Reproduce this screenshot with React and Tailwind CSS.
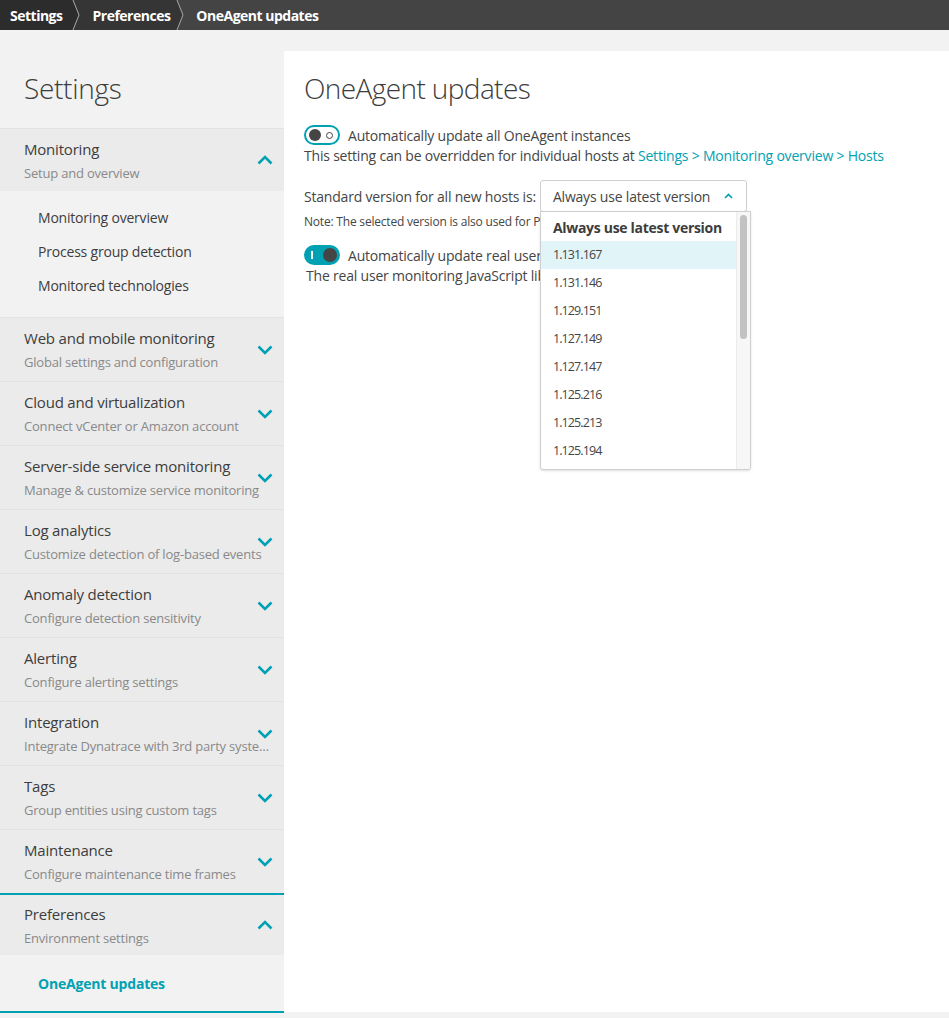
import React from 'react';

const TEAL = '#00a1b2';

const sections = [
  { title: 'Web and mobile monitoring', sub: 'Global settings and configuration' },
  { title: 'Cloud and virtualization', sub: 'Connect vCenter or Amazon account' },
  { title: 'Server-side service monitoring', sub: 'Manage & customize service monitoring' },
  { title: 'Log analytics', sub: 'Customize detection of log-based events' },
  { title: 'Anomaly detection', sub: 'Configure detection sensitivity' },
  { title: 'Alerting', sub: 'Configure alerting settings' },
  { title: 'Integration', sub: 'Integrate Dynatrace with 3rd party systems' },
  { title: 'Tags', sub: 'Group entities using custom tags' },
  { title: 'Maintenance', sub: 'Configure maintenance time frames' },
];

const versions = [
  '1.131.167',
  '1.131.146',
  '1.129.151',
  '1.127.149',
  '1.127.147',
  '1.125.216',
  '1.125.213',
  '1.125.194',
  '1.125.182',
];

const Chevron = ({ up = false, className = '' }) => (
  <svg width="16" height="10" viewBox="0 0 16 10" className={className}>
    <polyline
      points={up ? '1.5,8.5 8,2 14.5,8.5' : '1.5,1.5 8,8 14.5,1.5'}
      fill="none"
      stroke={TEAL}
      strokeWidth="2.6"
    />
  </svg>
);

// breadcrumb separator: left colour filled up to the chevron line
const CrumbSep = ({ from, to }) => (
  <svg width="8" height="30" viewBox="0 0 8 30" style={{ background: to }}>
    <polygon points="0,0 1,0 7,15 1,30 0,30" fill={from} />
    <polyline points="1,0 7,15 1,30" fill="none" stroke="#a8a8a8" strokeWidth="1" />
  </svg>
);

const SectionHeader = ({ title, sub, open = false, h = 'h-[63px]', pt = 'pt-[9px]' }) => (
  <div className={`relative bg-[#ebebeb] pl-[24px] pr-[11px] ${h} ${pt}`}>
    <div className="text-[15px] leading-[22px] text-[#3d3d3d]">{title}</div>
    <div className="mt-[2px] truncate text-[13px] leading-[22px] text-[#898989]">{sub}</div>
    <Chevron up={open} className="absolute right-[11px] top-1/2 -translate-y-1/2" />
  </div>
);

export default function App() {
  return (
    <div className="min-h-screen bg-[#f2f2f2] font-['Open_Sans',sans-serif] tracking-[-0.2px] text-[#454545]">
      {/* Breadcrumb bar */}
      <div className="flex h-[30px] items-stretch bg-[#444444] text-[14px] font-bold tracking-[-0.5px] text-white">
        <div className="flex items-center bg-[#2c2c2c] pl-[10px] pr-[10px]">Settings</div>
        <CrumbSep from="#2c2c2c" to="#353535" />
        <div className="flex items-center bg-[#353535] pl-[12px] pr-[6px]">Preferences</div>
        <CrumbSep from="#353535" to="#444444" />
        <div className="flex flex-1 items-center pl-[12px]">OneAgent updates</div>
      </div>

      <div className="flex items-stretch">
        {/* Sidebar */}
        <aside className="w-[284px] shrink-0">
          <div className="h-[98px] pl-[24px] pt-[40px] text-[28px] font-light leading-[36px] tracking-[-0.3px] text-[#3d3d3d]">
            Settings
          </div>

          <div className="border-t border-[#e3e3e3]">
            <SectionHeader title="Monitoring" sub="Setup and overview" open h="h-[62px]" />
            <div className="pb-[15px] pl-[38px] pt-[9px] text-[14px] text-[#3d3d3d]">
              <div className="flex h-[34px] items-center">Monitoring overview</div>
              <div className="flex h-[34px] items-center">Process group detection</div>
              <div className="flex h-[34px] items-center">Monitored technologies</div>
            </div>
          </div>

          {sections.map((s) => (
            <div key={s.title} className="border-t border-[#e3e3e3]">
              <SectionHeader title={s.title} sub={s.sub} />
            </div>
          ))}

          <div className="border-b-2 border-t-2 border-[#00a1b2]">
            <SectionHeader title="Preferences" sub="Environment settings" open h="h-[60px]" pt="pt-[8px]" />
            <div className="flex h-[56px] items-center pl-[38px] text-[14px] font-bold text-[#00a1b2]">
              OneAgent updates
            </div>
          </div>
        </aside>

        {/* Main panel */}
        <main className="mb-[1px] mt-[21px] flex-1 bg-white px-[20px] pt-[19px]">
          <h1 className="text-[28px] font-light leading-[36px] tracking-[-0.6px] text-[#3d3d3d]">OneAgent updates</h1>

          <div className="mt-[19px] flex h-[20px] items-center gap-[8px] text-[14px]">
            <div className="flex h-[20px] w-[36px] items-center justify-between rounded-full border-2 border-[#00a1b2] bg-white px-[3px]">
              <span className="h-[12px] w-[12px] rounded-full bg-[#454545]" />
              <span className="mr-[2px] h-[7px] w-[7px] rounded-full border border-[#454545]" />
            </div>
            <span>Automatically update all OneAgent instances</span>
          </div>
          <div className="text-[14px] leading-[22px]">
            This setting can be overridden for individual hosts at{' '}
            <span className="text-[#00a1b2]">Settings &gt; Monitoring overview &gt; Hosts</span>
          </div>

          <div className="mt-[13px] flex items-center gap-[4px] text-[14px]">
            <span>Standard version for all new hosts is:</span>
            <div className="relative">
              <div className="flex h-[32px] w-[207px] items-center justify-between rounded-[3px] border border-[#cfcfcf] bg-white pl-[12px] pr-[13px]">
                <span>Always use latest version</span>
                <svg width="9" height="6" viewBox="0 0 9 6">
                  <polyline points="1,5 4.5,1.5 8,5" fill="none" stroke={TEAL} strokeWidth="1.6" />
                </svg>
              </div>

              {/* open dropdown */}
              <div className="absolute left-0 top-[31px] z-10 flex h-[259px] w-[211px] overflow-hidden rounded-b-[3px] border border-[#cfcfcf] bg-white shadow-sm">
                <div className="flex-1 pt-[1px]">
                  <div className="flex h-[28px] items-center pl-[12px] font-bold tracking-[-0.3px] text-[#3d3d3d]">
                    Always use latest version
                  </div>
                  {versions.map((v, i) => (
                    <div
                      key={v}
                      className={
                        i === 0
                          ? 'flex h-[28px] items-center bg-[#e1f4f7] pl-[12px] text-[12.5px] tracking-[-0.9px]'
                          : 'flex h-[28px] items-center pl-[12px] text-[12.5px] tracking-[-0.9px]'
                      }
                    >
                      {v}
                    </div>
                  ))}
                </div>
                <div className="w-[14px] shrink-0 border-l border-[#ececec] bg-[#f7f7f7] px-[3px] pt-[3px]">
                  <div className="h-[124px] rounded-full bg-[#c2c2c2]" />
                </div>
              </div>
            </div>
          </div>

          <div className="mt-[2px] text-[12px] leading-[16px]">
            Note: The selected version is also used for PaaS deployments and installers.
          </div>

          <div className="mt-[15px] flex h-[20px] items-center gap-[8px] text-[14px]">
            <div className="flex h-[20px] w-[36px] items-center justify-between rounded-full bg-[#00a1b2] pl-[7px] pr-[3px]">
              <span className="h-[8px] w-[2px] bg-white" />
              <span className="h-[14px] w-[14px] rounded-full bg-[#454545]" />
            </div>
            <span>Automatically update real user monitoring JavaScript library</span>
          </div>
          <div className="pl-[2px] text-[14px] leading-[22px]">
            The real user monitoring JavaScript library is updated automatically.
          </div>
        </main>
      </div>
    </div>
  );
}
